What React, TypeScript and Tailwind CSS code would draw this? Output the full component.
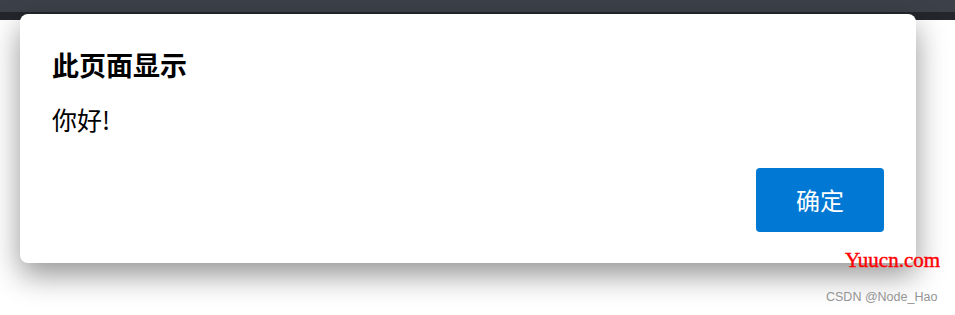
export default function App() {
  return (
    <div className="relative h-[315px] w-[955px] overflow-hidden bg-white">
      {/* browser chrome behind the dialog */}
      <div className="h-[12px] bg-[#3c4049]" />
      <div className="h-[8px] bg-[#23272c]" />

      <div className="absolute left-[20px] top-[14px] flex h-[249px] w-[896px] flex-col rounded-[8px] bg-white pl-[32px] pr-[32px] pt-[33px] pb-[31px] shadow-[0_12px_30px_rgba(0,0,0,0.42)] font-['Noto_Sans_CJK_SC',sans-serif] text-black">
        <h2 className="text-[27px] font-bold leading-[36px]">此页面显示</h2>
        <p className="mt-[19px] text-[25px] leading-[34px]">你好!</p>
        <div className="mt-auto flex justify-end">
          <button className="h-[64px] w-[128px] rounded-[4px] bg-[#0078d4] text-[24px] text-white">确定</button>
        </div>
      </div>

      <span className="absolute left-[845px] top-[248px] font-['Liberation_Serif',serif] text-[21px] leading-[24px] text-[#ff0000] [-webkit-text-stroke:0.4px_#ff0000]">
        Yuucn.com
      </span>
      <span className="absolute left-[826px] top-[289px] font-['Liberation_Sans',Arial,sans-serif] text-[12.5px] leading-[16px] text-[#949494]">
        CSDN @Node_Hao
      </span>
    </div>
  );
}
